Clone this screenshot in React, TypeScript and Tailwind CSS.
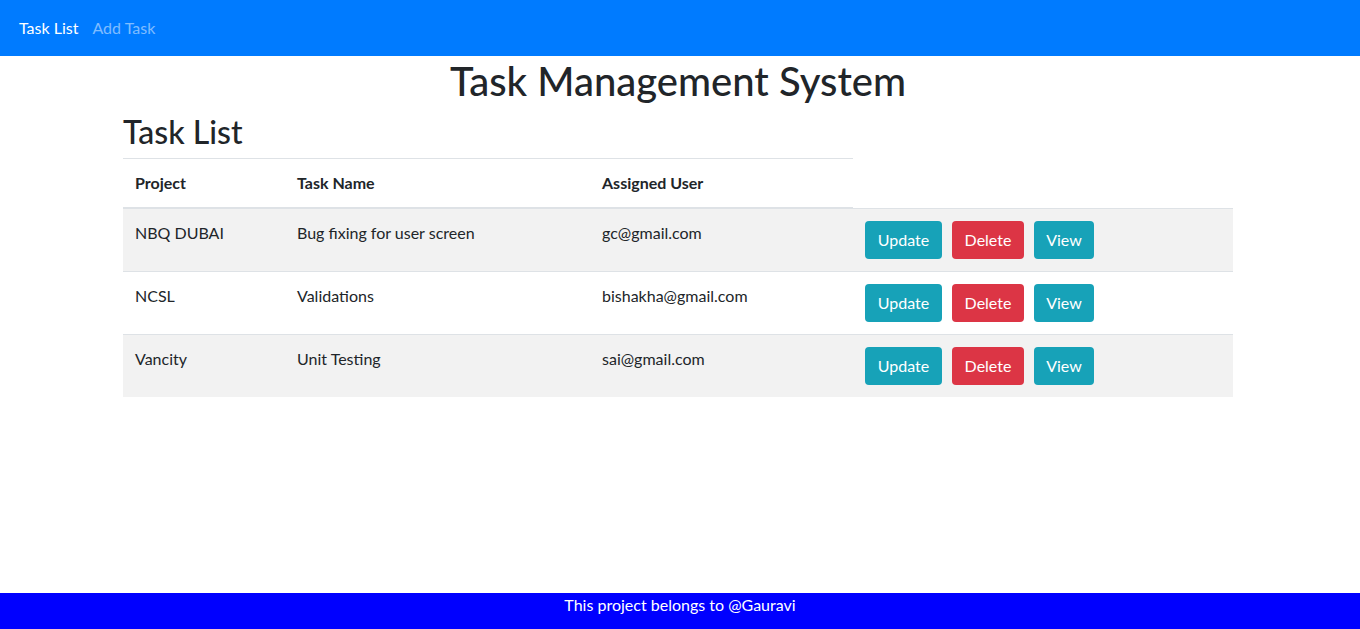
const tasks = [
  { project: 'NBQ DUBAI', name: 'Bug fixing for user screen', user: 'gc@gmail.com' },
  { project: 'NCSL', name: 'Validations', user: 'bishakha@gmail.com' },
  { project: 'Vancity', name: 'Unit Testing', user: 'sai@gmail.com' },
]

export default function App() {
  return (
    <div className="min-h-[629px] bg-white text-[#212529] font-['Lato','Noto_Sans',sans-serif] text-base leading-6">
      <nav className="h-14 bg-[#007bff] flex items-center px-[19px] gap-[14px]">
        <a className="text-white">Task List</a>
        <a className="text-white/50">Add Task</a>
      </nav>

      <div className="w-[1110px] ml-[123px]">
        <h1 className="text-[40px] leading-[48px] font-medium text-center mt-[1px] mb-2">Task Management System</h1>
        <h2 className="text-[32px] leading-[38px] font-medium mb-[7px]">Task List</h2>

        <table className="w-full border-collapse">
          <thead>
            <tr>
              <th className="w-[162px] text-left font-bold p-3 border-t border-[#dee2e6] border-b-2">Project</th>
              <th className="w-[305px] text-left font-bold p-3 border-t border-[#dee2e6] border-b-2">Task Name</th>
              <th className="w-[263px] text-left font-bold p-3 border-t border-[#dee2e6] border-b-2">Assigned User</th>
            </tr>
          </thead>
          <tbody>
            {tasks.map((t, i) => (
              <tr key={t.project} className={i % 2 === 0 ? 'bg-[#f2f2f2]' : 'bg-white'}>
                <td className="p-3 align-top border-t border-[#dee2e6]">{t.project}</td>
                <td className="p-3 align-top border-t border-[#dee2e6]">{t.name}</td>
                <td className="p-3 align-top border-t border-[#dee2e6]">{t.user}</td>
                <td className="p-3 align-top border-t border-[#dee2e6]">
                  <div className="flex gap-[10px]">
                    <button className="h-[38px] w-[77px] rounded bg-[#17a2b8] text-white">Update</button>
                    <button className="h-[38px] w-[72px] rounded bg-[#dc3545] text-white">Delete</button>
                    <button className="h-[38px] w-[60px] rounded bg-[#17a2b8] text-white">View</button>
                  </div>
                </td>
              </tr>
            ))}
          </tbody>
        </table>
      </div>

      <footer className="fixed bottom-0 left-0 w-full h-9 bg-[#0000ff] text-white text-center">
        This project belongs to @Gauravi
      </footer>
    </div>
  )
}
